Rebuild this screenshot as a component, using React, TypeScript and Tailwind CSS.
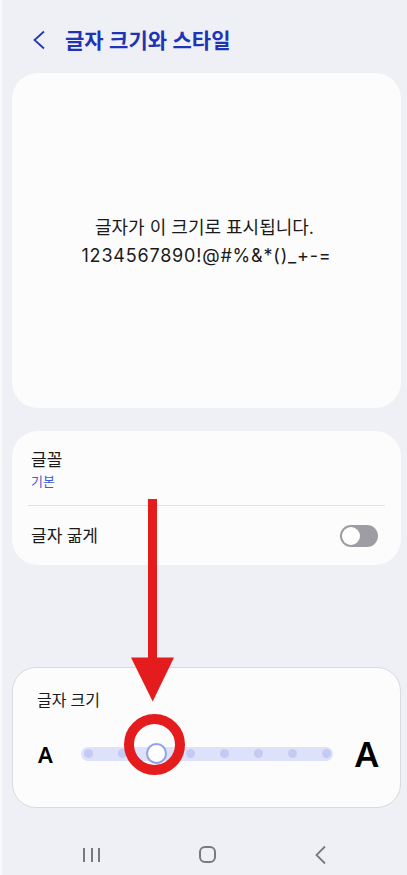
const font = { fontFamily: '"Noto Sans", "Noto Sans CJK KR", sans-serif' };
const previewFont = { fontFamily: 'Inter, "Noto Sans CJK KR", sans-serif' };

function Toggle() {
  return (
    <div className="w-[38px] h-[22px] rounded-full bg-[#9d9da3] p-[2px] flex items-center">
      <div className="w-[18px] h-[18px] rounded-full bg-white" />
    </div>
  );
}

function SizeSlider({ value }: { value: number }) {
  const steps = [0, 1, 2, 3, 4, 5, 6, 7];
  return (
    <div className="w-[252px] h-[14px] rounded-full bg-[#dde1f9] px-[7px]">
      <div className="h-full flex items-center justify-between">
        {steps.map((s) => (
          <div key={s} className="w-0 h-full flex items-center justify-center">
            {s === value ? (
              <div className="shrink-0 w-[21px] h-[21px] rounded-full bg-white border-2 border-[#8ea2f1]" />
            ) : (
              <div className="shrink-0 w-[9px] h-[9px] rounded-full bg-[#c3cbf5]" />
            )}
          </div>
        ))}
      </div>
    </div>
  );
}

export default function App() {
  return (
    <div className="relative flex w-[407px] h-[875px] overflow-hidden bg-[#eff0f5]" style={font}>
      {/* left edge strip */}
      <div className="w-[2px] bg-[#f9f9fb]" />

      <div className="flex-1 flex flex-col">
        {/* Header */}
        <div className="h-[73px] flex items-start pt-[27px] pl-[31px]">
          <svg width="12" height="26" viewBox="0 0 12 26">
            <polyline points="11,4.5 1.5,13 11,21.5" fill="none" stroke="#2338b3" strokeWidth="1.8" />
          </svg>
          <span className="ml-[20px] text-[21px] leading-[26px] font-bold text-[#1e34b4]">
            글자 크기와 스타일
          </span>
        </div>

        {/* Preview card */}
        <div
          className="ml-[10px] mr-[6px] h-[335px] rounded-[26px] bg-[#fcfcfd] flex flex-col items-center justify-center pt-[3px]"
          style={previewFont}
        >
          <p className="text-[18px] leading-[28px] text-[#1a1a1a] pr-[4px]">글자가 이 크기로 표시됩니다.</p>
          <p className="text-[18px] leading-[28px] tracking-[0.8px] text-[#1a1a1a]">1234567890!@#%&amp;*()_+-=</p>
        </div>

        {/* Font settings card */}
        <div className="mt-[23px] ml-[10px] mr-[6px] h-[134px] rounded-[26px] bg-[#fcfcfd] flex flex-col">
          <div className="pt-[17px] px-[19px]">
            <p className="text-[17px] leading-[24px] text-[#1a1a1a]">글꼴</p>
            <p className="text-[13px] leading-[18px] text-[#3d5ad8]">기본</p>
          </div>
          <div className="mt-[15px] mx-[16px] h-px bg-[#e3e3e6]" />
          <div className="flex-1 flex items-center justify-between pl-[19px] pr-[23px]">
            <span className="text-[17px] text-[#1a1a1a]">글자 굶게</span>
            <Toggle />
          </div>
        </div>

        {/* Font size card */}
        <div className="mt-[102px] ml-[10px] mr-[6px] h-[141px] rounded-[24px] bg-[#fcfcfd] border border-[#dadade] flex flex-col">
          <p className="pt-[20px] pl-[24px] text-[16px] leading-[24px] text-[#1a1a1a]">글자 크기</p>
          <div className="mt-[24px] flex items-center pl-[25px]">
            <span className="w-[43px] text-[22px] leading-none font-semibold text-black">A</span>
            <SizeSlider value={2} />
            <span className="ml-[22px] text-[35px] leading-none font-semibold text-black">A</span>
          </div>
        </div>

        {/* Navigation bar */}
        <div className="flex-1 flex items-center justify-between pl-[81px] pr-[80px] pt-[26px]">
          <div className="flex gap-[5.5px] h-[14px]">
            <div className="w-[2px] h-full bg-[#7a7a7e]" />
            <div className="w-[2px] h-full bg-[#7a7a7e]" />
            <div className="w-[2px] h-full bg-[#7a7a7e]" />
          </div>
          <div className="w-[17px] h-[17px] rounded-[6px] border-2 border-[#7a7a7e]" />
          <svg width="12" height="20" viewBox="0 0 12 20">
            <polyline points="10,1.5 1.5,10 10,18.5" fill="none" stroke="#7a7a7e" strokeWidth="1.8" />
          </svg>
        </div>
      </div>

      {/* Red annotation: arrow */}
      <svg className="absolute left-[128px] top-[498px]" width="50" height="206" viewBox="0 0 50 206">
        <rect x="20" y="1" width="9" height="162" fill="#e41c1e" />
        <polygon points="3,159.5 46,159.5 24.7,203.5" fill="#e41c1e" />
      </svg>

      {/* Red annotation: ring */}
      <div className="absolute left-[124px] top-[714px] w-[61px] h-[61px] rounded-full border-[10px] border-[#e41c1e]" />
    </div>
  );
}
